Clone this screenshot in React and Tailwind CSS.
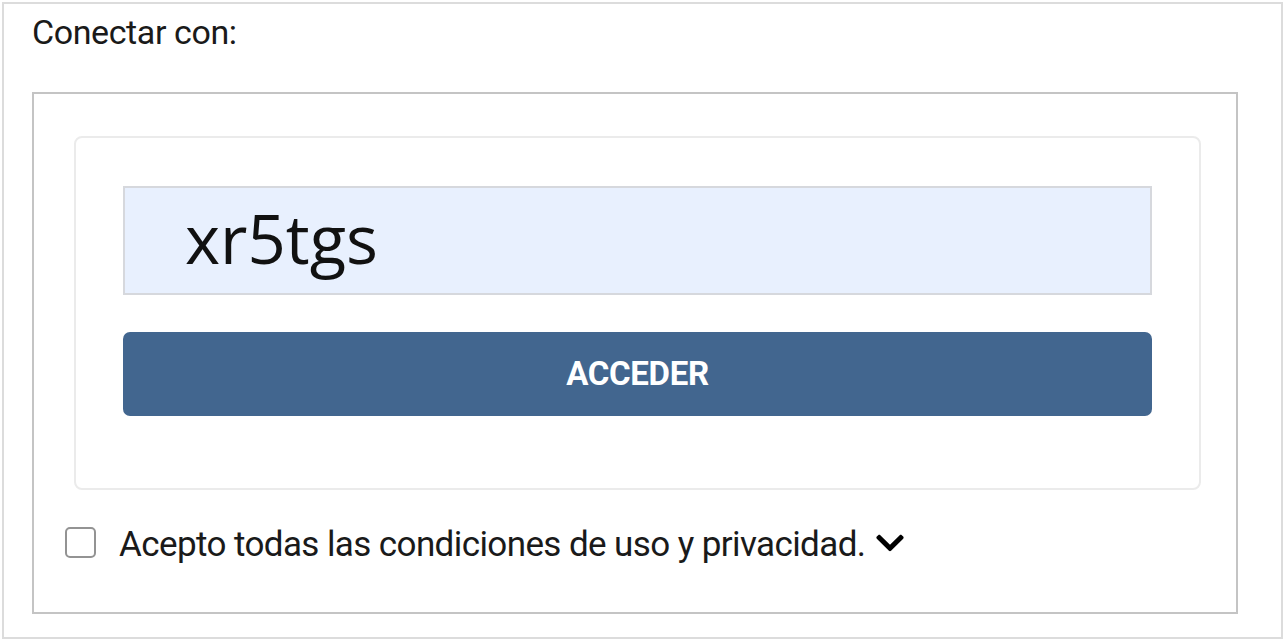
import React from "react";
import { FaChevronDown } from "react-icons/fa";

export default function App() {
  const din = { fontFamily: "Roboto, 'Liberation Sans', sans-serif" };
  return (
    <div className="w-[1285px] h-[644px] bg-white p-[2px]">
      <div className="w-[1281px] h-[637px] border-2 border-[#dcdcdc] pl-[28px] pt-[7px]">
        <div style={din} className="text-[34px] leading-[42px] text-[#1a1a1a] tracking-[-0.4px]">
          Conectar con:
        </div>
        <div className="mt-[39px] w-[1206px] h-[522px] border-2 border-[#c4c4c4] pl-[40px] pt-[42px]">
          <div className="w-[1127px] h-[354px] rounded-[8px] border-2 border-[#ebebeb] pl-[47px] pt-[48px]">
            <div className="w-[1029px] h-[109px] bg-[#e8f0fe] border-2 border-[#d6d8dd] flex items-center pl-[60px]">
              <span style={{ fontFamily: "'Open Sans', sans-serif" }} className="text-[67px] text-[#111] leading-none pb-[4px]">
                xr5tgs
              </span>
            </div>
            <div
              style={din}
              className="mt-[37px] w-[1029px] h-[84px] rounded-[7px] bg-[#42668f] flex items-center justify-center text-white font-bold text-[33px] tracking-[-0.3px]"
            >
              ACCEDER
            </div>
          </div>
          <div className="mt-[34px] flex items-center -ml-[9px]">
            <div className="w-[31px] h-[31px] -mt-[6px] rounded-[5px] border-2 border-[#939393] bg-white" />
            <span style={din} className="ml-[23px] text-[35px] leading-[42px] text-[#1a1a1a] tracking-[-0.6px]">
              Acepto todas las condiciones de uso y privacidad.
            </span>
            <FaChevronDown className="ml-[9px] -mt-[4px] text-[32px] text-black" />
          </div>
        </div>
      </div>
    </div>
  );
}
